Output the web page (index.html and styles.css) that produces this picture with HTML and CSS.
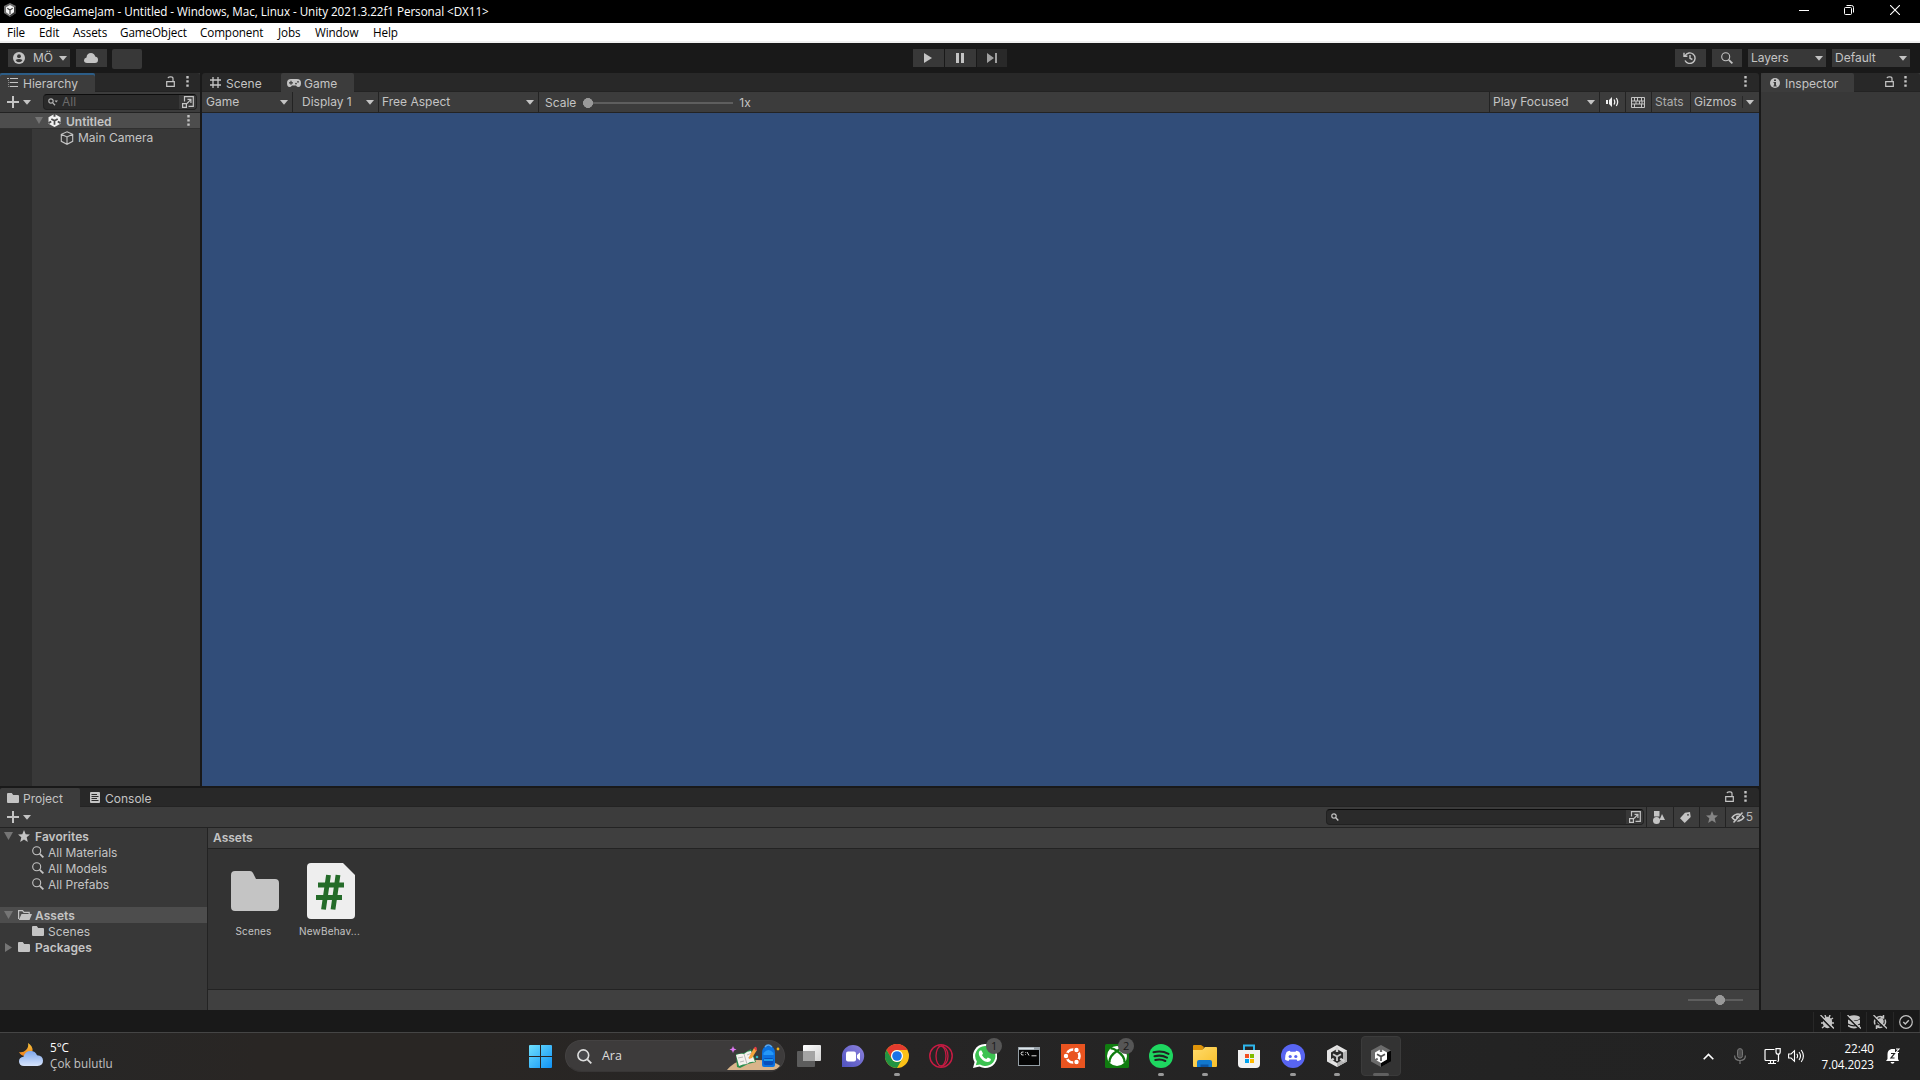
FILE: index.html
```html
<!DOCTYPE html>
<html lang="tr">
<head>
<meta charset="utf-8">
<title>GoogleGameJam - Unity</title>
<link rel="stylesheet" href="styles.css">
</head>
<body>
<svg class="defs" width="0" height="0">
  <defs>
    <symbol id="lock" viewBox="0 0 9 11"><path d="M.7 5.700h7.600v4.600H.7zM7 5.500V2.600Q7 .8 5 .8H4Q2.200.8 2 2.200" fill="none" stroke="#c4c4c4" stroke-width="1.200"/></symbol>
    <symbol id="dots" viewBox="0 0 3 11"><path d="M.3 0h2.400v2.400H.3zM.3 4.200h2.400v2.400H.3zM.3 8.400h2.400v2.400H.3z" fill="#c4c4c4"/></symbol>
    <symbol id="arrow" viewBox="0 0 8 5"><path d="M0 0h8L4 4.800z" fill="#c4c4c4"/></symbol>
    <symbol id="plus" viewBox="0 0 12 12"><path d="M5 0h2v5h5v2H7v5H5V7H0V5h5z" fill="#c4c4c4"/></symbol>
    <symbol id="find" viewBox="0 0 12 12"><circle cx="4.700" cy="4.700" r="4" fill="none" stroke="#c4c4c4" stroke-width="1.100"/><path d="M7.800 7.800l3.600 3.600" stroke="#c4c4c4" stroke-width="1.800"/></symbol>
    <symbol id="folder" viewBox="0 0 12 10"><path d="M0 1Q0 0 1 0h3.800L6.200 2H11q1 0 1 1v6q0 1-1 1H1Q0 10 0 9z" fill="#c4c4c4"/></symbol>
    <symbol id="star" viewBox="0 0 12 12"><path d="M6 0l1.700 4.200 4.300.3-3.300 2.800L9.800 12 6 9.500 2.200 12l1.100-4.700L0 4.500l4.300-.3z"/></symbol>
    <symbol id="expand" viewBox="0 0 12 12"><path d="M2.500 5.500V.7h8.800v9.600H6.500M.6 7.600h3.800v3.800H.6z" fill="none" stroke="#c4c4c4" stroke-width="1.200"/><path d="M5 7.500L8.500 3.800M5.500 3.400H8.900V7" fill="none" stroke="#c4c4c4" stroke-width="1.200"/></symbol>
  </defs>
</svg>

<header class="titlebar">
  <svg class="app-icon" width="14" height="14" viewBox="0 0 14 14"><path d="M7 0l6 3v7l-6 4-6-4V3z" fill="#6f6f6f"/><path d="M7 7l6-4v7l-6 4z" fill="#3a3a3a"/><path d="M7 2l4 2.300v5L7 12 3 9.300v-5z" fill="#f4f4f4"/><path d="M7 7v4M7 7L4.300 5.300M7 7l2.700-1.700" stroke="#444" stroke-width="1.200"/></svg>
  <span class="title-text">GoogleGameJam - Untitled - Windows, Mac, Linux - Unity 2021.3.22f1 Personal &lt;DX11&gt;</span>
  <svg class="win-min" width="10" height="10" viewBox="0 0 10 10"><path d="M0 5.500h10" stroke="#fff"/></svg>
  <svg class="win-max" width="10" height="10" viewBox="0 0 10 10"><path d="M.5 3.500q0-1 1-1h5q1 0 1 1v5q0 1-1 1h-5q-1 0-1-1zM2.500.5h5q2 0 2 2v5" fill="none" stroke="#fff"/></svg>
  <svg class="win-close" width="10" height="10" viewBox="0 0 10 10"><path d="M0 0l10 10M10 0L0 10" stroke="#fff" stroke-width="1.100"/></svg>
</header>
<nav class="menubar">
  <span class="m-file">File</span><span class="m-edit">Edit</span><span class="m-assets">Assets</span><span class="m-object">GameObject</span><span class="m-component">Component</span><span class="m-jobs">Jobs</span><span class="m-window">Window</span><span>Help</span>
</nav>

<div class="toolbar">
  <div class="btn account">
    <svg width="12" height="12" viewBox="0 0 12 12"><circle cx="6" cy="6" r="6" fill="#c4c4c4"/><circle cx="6" cy="4.200" r="1.900" fill="#383838"/><path d="M2.500 8q3.500-2.200 7 0Q8.500 10.300 6 10.300T2.500 8z" fill="#383838"/></svg>
    <span>MÖ</span><svg width="8" height="5"><use href="#arrow"/></svg>
  </div>
  <div class="btn cloud"><svg width="14" height="10" viewBox="0 0 14 10"><path d="M3 10Q0 10 0 7.300 0 5 2.500 4.500 2.800 0 7 0q3.300 0 4.200 3.500Q14 4 14 6.800 14 10 11 10z" fill="#c4c4c4"/></svg></div>
  <div class="btn blank"></div>
  <div class="btn play"><svg width="8" height="10"><path d="M0 0l8 5-8 5z" fill="#c4c4c4"/></svg></div>
  <div class="btn pause"><svg width="8" height="10"><path d="M0 0h3v10H0zM5 0h3v10H5z" fill="#c4c4c4"/></svg></div>
  <div class="btn step"><svg width="10" height="10"><path d="M0 0l7 5-7 5zM8 0h2v10H8z" fill="#a0a0a0"/></svg></div>
  <div class="btn history"><svg width="13" height="12" viewBox="0 0 13 12"><path d="M2.200 3.500A5.300 5.300 0 1 1 2 8.500M1 .8v3.400h3.400M7 3v3.300l2.400 1.200" fill="none" stroke="#c4c4c4" stroke-width="1.400"/></svg></div>
  <div class="btn search-btn"><svg width="12" height="12"><use href="#find"/></svg></div>
  <div class="btn select layers"><span>Layers</span><svg width="8" height="5"><use href="#arrow"/></svg></div>
  <div class="btn select"><span>Default</span><svg width="8" height="5"><use href="#arrow"/></svg></div>
</div>

<main class="workspace">
  <div class="left-area">
    <div class="upper">
      <section class="hierarchy">
        <div class="tabs">
          <div class="tab tab-hierarchy active focused"><svg width="11" height="9" viewBox="0 0 11 9"><path d="M0 .5h2M3 .5h8M3 4.500h8M3 8.500h8" stroke="#c4c4c4"/><path d="M1.500 2v7M1.500 4.500H3M1.500 8.500H3" fill="none" stroke="#8a8a8a" stroke-dasharray="1 1"/></svg><span>Hierarchy</span></div>
          <div class="tab-tools"><svg width="9" height="11"><use href="#lock"/></svg><svg width="3" height="11"><use href="#dots"/></svg></div>
        </div>
        <div class="strip h-strip">
          <svg width="12" height="12"><use href="#plus"/></svg><svg class="add-arrow" width="8" height="5"><use href="#arrow"/></svg>
          <div class="field h-field"><svg width="10" height="8" viewBox="0 0 10 8"><circle cx="3" cy="3" r="2.200" fill="none" stroke="#b4b4b4" stroke-width="1.200"/><path d="M4.600 4.600L7 7.300" stroke="#b4b4b4" stroke-width="1.300"/><path d="M6.500 2.500H10L8.200 4.500z" fill="#b4b4b4"/></svg><span>All</span><i class="field-end"><svg width="12" height="12"><use href="#expand"/></svg></i></div>
        </div>
        <div class="scene-row">
          <svg class="fold" width="8" height="7"><path d="M0 0h8L4 7z" fill="#757575"/></svg>
          <svg width="13" height="13" viewBox="0 0 13 13"><path d="M6.500 0L12.500 3.300v6.400L6.500 13 .5 9.700V3.300z" fill="#f2f2f2"/><path d="M6.500 6.800v4M6.500 6.800L3.300 4.900M6.500 6.800l3.200-1.900" stroke="#4d4d4d" stroke-width="1.700"/><path d="M5.500 0h2v2.700h-2zM0 8.200l2.700-1.500 1 1.600L1 9.900zM13 8.200l-2.700-1.500-1 1.600L12 9.900z" fill="#4d4d4d"/></svg>
          <span>Untitled</span><svg width="3" height="11"><use href="#dots"/></svg>
        </div>
        <div class="h-body">
          <div class="gutter"></div>
          <div class="object-row"><svg width="14" height="14" viewBox="0 0 14 14"><path d="M7 .8l5.700 2.500v7L7 13.300l-5.700-3v-7zM1.300 3.300L7 6l5.700-2.700M7 6v7.300" fill="none" stroke="#c4c4c4" stroke-width="1.100"/></svg><span>Main Camera</span></div>
        </div>
      </section>
      <section class="game">
        <div class="tabs">
          <div class="tab tab-scene"><svg width="11" height="11" viewBox="0 0 11 11"><path d="M3 0v11M8 0v11M0 3h11M0 8h11" stroke="#c4c4c4" stroke-width="1.300"/></svg><span>Scene</span></div>
          <div class="tab tab-game active"><svg width="14" height="8" viewBox="0 0 14 8"><path d="M4 0h6q4 0 4 4 0 4-2.500 4Q10 8 9 6.500H5Q4 8 2.500 8 0 8 0 4q0-4 4-4z" fill="#c4c4c4"/><path d="M4 1.800v4M2 3.800h4" stroke="#3c3c3c" stroke-width="1.200"/><circle cx="9" cy="4.600" r=".9" fill="#3c3c3c"/><circle cx="11" cy="2.800" r=".9" fill="#3c3c3c"/></svg><span>Game</span></div>
          <div class="tab-tools"><svg width="3" height="11"><use href="#dots"/></svg></div>
        </div>
        <div class="strip">
          <div class="cell c-game"><span>Game</span><svg width="8" height="5"><use href="#arrow"/></svg></div>
          <div class="cell c-display"><span>Display 1</span><svg width="8" height="5"><use href="#arrow"/></svg></div>
          <div class="cell c-aspect"><span>Free Aspect</span><svg width="8" height="5"><use href="#arrow"/></svg></div>
          <div class="c-scale"><span>Scale</span><i class="slider"></i><span>1x</span></div>
          <div class="cell c-focus"><span>Play Focused</span><svg width="8" height="5"><use href="#arrow"/></svg></div>
          <div class="cell c-sound"><svg width="13" height="10" viewBox="0 0 13 10"><path d="M0 3h2v4H0zM3 3l3-3v10L3 7z" fill="#eee"/><path d="M8 2.500q1.500 2.500 0 5M10.300 1q2.700 4 0 8" fill="none" stroke="#eee" stroke-width="1.300"/></svg></div>
          <div class="cell c-keys"><svg width="14" height="11" viewBox="0 0 14 11"><path d="M.5.5h13v10H.5zM.5 4h13M.5 7h13M3.500.5V4M6.500.5V4M10.500.5V4M5 4v3M8.500 4v3M11 4v3M3.500 7v3.500M10.500 7v3.500" fill="none" stroke="#c4c4c4"/></svg></div>
          <div class="cell c-stats"><span>Stats</span></div>
          <div class="cell c-gizmos"><span>Gizmos</span><i></i><svg width="8" height="5"><use href="#arrow"/></svg></div>
        </div>
        <div class="viewport"></div>
      </section>
    </div>
    <section class="project">
      <div class="tabs">
        <div class="tab tab-project active"><svg width="12" height="10"><use href="#folder"/></svg><span>Project</span></div>
        <div class="tab tab-console"><svg width="10" height="11" viewBox="0 0 10 11"><rect width="10" height="11" rx="1" fill="#c4c4c4"/><path d="M1.500 2.500H7M1.500 4.500h7M1.500 6.500H7M1.500 8.500h7" stroke="#282828"/></svg><span>Console</span></div>
        <div class="tab-tools"><svg width="9" height="11"><use href="#lock"/></svg><svg width="3" height="11"><use href="#dots"/></svg></div>
      </div>
      <div class="strip p-strip">
        <svg width="12" height="12"><use href="#plus"/></svg><svg class="add-arrow" width="8" height="5"><use href="#arrow"/></svg>
        <div class="field p-field"><svg width="8" height="8" viewBox="0 0 8 8"><circle cx="3" cy="3" r="2.200" fill="none" stroke="#c4c4c4" stroke-width="1.200"/><path d="M4.600 4.600L7.300 7.500" stroke="#c4c4c4" stroke-width="1.400"/></svg><i class="field-end"><svg width="12" height="12"><use href="#expand"/></svg></i></div>
        <div class="tool t-type"><svg width="12" height="13" viewBox="0 0 12 13"><path d="M1 0h5.500v5.500H1zM9 3l3 6H6.500z" fill="#c4c4c4"/><circle cx="3.500" cy="9.500" r="3.500" fill="#c4c4c4"/></svg></div>
        <div class="tool t-label"><svg width="11" height="11" viewBox="0 0 11 11"><path d="M5 .8L10 0l.7 5-6 6L0 6.300z" fill="#c4c4c4"/><circle cx="8" cy="2.800" r=".9" fill="#3c3c3c"/></svg></div>
        <div class="tool t-star"><svg width="12" height="12" fill="#858585"><use href="#star"/></svg></div>
        <div class="tool t-hidden"><svg width="14" height="11" viewBox="0 0 14 11"><path d="M1 5.500q6-7 12 0-6 7-12 0z" fill="none" stroke="#c4c4c4" stroke-width="1.300"/><circle cx="7" cy="5.500" r="1.900" fill="#c4c4c4"/><path d="M3.500 11.500l9-11" stroke="#3c3c3c" stroke-width="1.200"/><path d="M2.500 10.500l9-10" stroke="#c4c4c4" stroke-width="1.500"/></svg><span>5</span></div>
      </div>
      <div class="browser">
        <div class="tree">
          <div class="node root"><svg width="9" height="8"><path d="M0 0h9L4.500 8z" fill="#757575"/></svg><svg class="ic" width="12" height="12" fill="#c4c4c4"><use href="#star"/></svg><span>Favorites</span></div>
          <div class="node leaf"><svg width="12" height="12"><use href="#find"/></svg><span>All Materials</span></div>
          <div class="node leaf"><svg width="12" height="12"><use href="#find"/></svg><span>All Models</span></div>
          <div class="node leaf"><svg width="12" height="12"><use href="#find"/></svg><span>All Prefabs</span></div>
          <div class="node root selected"><svg width="9" height="8"><path d="M0 0h9L4.500 8z" fill="#757575"/></svg><svg class="ic open" width="14" height="10" viewBox="0 0 14 10"><path d="M.6 9V.6h3.900L6 2.400h5.200v1.800" fill="none" stroke="#c4c4c4" stroke-width="1.200"/><path d="M3.500 4H14l-2.500 6H.8z" fill="#c4c4c4"/></svg><span>Assets</span></div>
          <div class="node leaf"><svg width="12" height="10"><use href="#folder"/></svg><span>Scenes</span></div>
          <div class="node root"><svg width="9" height="9"><path d="M1 0v9l7-4.500z" fill="#757575"/></svg><svg class="ic" width="12" height="10"><use href="#folder"/></svg><span>Packages</span></div>
        </div>
        <div class="files">
          <div class="crumb">Assets</div>
          <div class="grid">
            <div class="item"><svg width="48" height="56" viewBox="0 0 48 56"><path d="M0 12q0-4 4-4h15q2 0 3 2l3 6h19q4 0 4 4v24q0 4-4 4H4q-4 0-4-4z" fill="#c4c4c4"/></svg><span>Scenes</span></div>
            <div class="item"><svg width="48" height="56" viewBox="0 0 48 56"><path d="M0 4q0-4 4-4h32l12 12v40q0 4-4 4H4q-4 0-4-4z" fill="#eee"/><path d="M21.500 12l-5 34.500M31 12l-5 34.500M11 22h26M9 34.500h26" stroke="#246b29" stroke-width="4.800"/></svg><span>NewBehav...</span></div>
          </div>
          <div class="files-foot"><i class="zoom-slider"></i></div>
        </div>
      </div>
    </section>
  </div>
  <section class="inspector">
    <div class="tabs">
      <div class="tab tab-inspector active"><svg width="10" height="10" viewBox="0 0 10 10"><circle cx="5" cy="5" r="5" fill="#c4c4c4"/><path d="M4 1.500h2v1.600H4zM3.500 4H6v3.500h.7v1H3.400v-1h.7V5h-.6z" fill="#3c3c3c"/></svg><span>Inspector</span></div>
      <div class="tab-tools"><svg width="9" height="11"><use href="#lock"/></svg><svg width="3" height="11"><use href="#dots"/></svg></div>
    </div>
  </section>
</main>

<div class="statusbar">
  <div><svg width="14" height="14" viewBox="0 0 14 14"><ellipse cx="7.500" cy="7.500" rx="4.700" ry="5.800" fill="#c4c4c4"/><path d="M2 3l3 2M1 8h4M2 13l4-3M13 3l-3 2M14 8h-4M13 13l-3-3M5 0l1 3M10 0L9 3" stroke="#c4c4c4" stroke-width="1.500"/><path d="M0 1.500L12.500 14" stroke="#191919" stroke-width="1.700"/><path d="M.5 0L14 13.500" stroke="#c4c4c4" stroke-width="1.300"/></svg></div>
  <div><svg width="14" height="14" viewBox="0 0 14 14"><ellipse cx="7" cy="2.800" rx="6" ry="2.600" fill="#c4c4c4"/><path d="M1 4.500q6 3.600 12 0v4q-6 3.600-12 0zM1 9.700q6 3.600 12 0v1.800q-6 3.800-12 0z" fill="#c4c4c4"/><path d="M0 1.500L12.500 14" stroke="#191919" stroke-width="1.600"/><path d="M.5 0L14 13.500" stroke="#c4c4c4" stroke-width="1.300"/></svg></div>
  <div><svg width="14" height="14" viewBox="0 0 14 14"><path d="M2 9.500A5.700 5.700 0 0 1 10 2.300M12 4.500A5.700 5.700 0 0 1 4 11.700M10.500 0v3H7.500M3.500 14v-3h3" fill="none" stroke="#c4c4c4" stroke-width="1.500"/><circle cx="7.500" cy="6.500" r="3.200" fill="#c4c4c4"/><path d="M0 1.500L12.500 14" stroke="#191919" stroke-width="1.600"/><path d="M.5 0L14 13.500" stroke="#c4c4c4" stroke-width="1.300"/></svg></div>
  <div><svg width="14" height="14" viewBox="0 0 14 14"><circle cx="7" cy="7" r="6.300" fill="none" stroke="#c4c4c4" stroke-width="1.200"/><path d="M4.300 7l2 2 3.500-3.800" fill="none" stroke="#c4c4c4" stroke-width="1.400"/></svg></div>
</div>

<footer class="taskbar">
  <div class="weather">
    <svg width="24" height="24" viewBox="0 0 24 24"><defs><linearGradient id="moon" x2="0" y2="1"><stop stop-color="#f8c63c"/><stop offset="1" stop-color="#ee7e1c"/></linearGradient><linearGradient id="cloudfill" x2="0" y2="1"><stop stop-color="#7fa8ee"/><stop offset="1" stop-color="#d7e4fb"/></linearGradient></defs><path d="M9 0q5 3 4.500 8T6 13Q2 13 0 9q4 1 7-2t2-7z" fill="url(#moon)"/><path d="M5 23q-5 0-5-4.700 0-4 4.500-4.600Q6 8 11.500 8q5 0 6.500 4.300 6 .4 6 5.400T18.500 23z" fill="url(#cloudfill)"/></svg>
    <div><b>5°C</b><span>Çok bulutlu</span></div>
  </div>
  <div class="start"><svg width="23" height="23" viewBox="0 0 23 23"><defs><linearGradient id="win" x2="1" y2="1"><stop stop-color="#6fe0fd"/><stop offset="1" stop-color="#1092f5"/></linearGradient></defs><path d="M1 0h10v11H0V1q0-1 1-1zM12 0h10q1 0 1 1v10H12zM0 12h11v11H1q-1 0-1-1zM12 12h11v10q0 1-1 1H12z" fill="url(#win)"/></svg></div>
  <div class="searchbox">
    <svg width="15" height="15" viewBox="0 0 15 15"><circle cx="6.300" cy="6.300" r="5.400" fill="#4a4a4d" stroke="#dedede" stroke-width="1.600"/><path d="M10.300 10.300L14.300 14.300" stroke="#dedede" stroke-width="1.800"/></svg>
    <span>Ara</span>
    <svg class="art" width="54" height="27" viewBox="0 0 54 27"><path d="M0 26q2-3 8-7 6-3 22-3 14 0 22 5l1 1q-2 4-8 4z" fill="#d9b48a"/><path d="M6 2l1 2.500L9.500 5.500 7 6.500 6 9 5 6.500 2.500 5.500 5 4.500z" fill="#e07af5"/><path d="M9 10l8-1 7-4 5 13-8 2-8 4-3-1z" fill="#2c8f4e"/><path d="M9 11q5-2 8-1 3-3 7-3l4 11q-5-1-8 2-4 0-8 2z" fill="#f5f3ee"/><path d="M17 10l3 10M11 14l5-1M13 18l4-1M20 11l5-2M21 14l5-2" stroke="#aaa" fill="none" stroke-width=".8"/><path d="M22 13l5-9 3 2-5 8-3 1z" fill="#f7a63b"/><path d="M27 4q2-3 3 1l-1 2z" fill="#e63d45"/><path d="M35 21V9q0-7 6.500-7T48 9v12q0 2-2 2H37q-2 0-2-2z" fill="#0b72e0"/><path d="M38 3q3-4 7 0" fill="none" stroke="#54a7f5" stroke-width="1.600"/><path d="M36.500 9q5-6 10 0v2h-10z" fill="#2598f8"/><rect x="36.500" y="14" width="10" height="7" rx="2" fill="#084ebb"/><path d="M37 16h9" stroke="#25b3f7" stroke-width="1.500"/><circle cx="51" cy="5" r="1.400" fill="#f5b417"/><circle cx="30" cy="13" r="1.300" fill="#30b7c6"/></svg>
  </div>
  <div class="task"><svg width="24" height="22" viewBox="0 0 24 22"><defs><linearGradient id="tv" x2="1" y2="1"><stop stop-color="#fff"/><stop offset="1" stop-color="#d2d2d2"/></linearGradient></defs><rect x="6" width="18" height="16" rx="1" fill="url(#tv)"/><rect y="6" width="18" height="16" rx="1" fill="#5c5c5c"/><path d="M6 6h12v10H6z" fill="#a4a4a4"/></svg></div>
  <div class="task"><svg width="24" height="24" viewBox="0 0 24 24"><defs><linearGradient id="chat" x1="1" x2="0" y2="1"><stop stop-color="#8d82dc"/><stop offset="1" stop-color="#4f52c0"/></linearGradient></defs><path d="M12 1a11.200 11 0 1 1 0 22H1V12A11.200 11 0 0 1 12 1z" fill="url(#chat)"/><rect x="5" y="7.500" width="10" height="10" rx="2" fill="#fff"/><path d="M16 11l3-2.500v8L16 14z" fill="#fff"/></svg></div>
  <div class="task running"><svg width="24" height="24" viewBox="0 0 24 24"><circle cx="12" cy="12" r="12" fill="#fbc117"/><path d="M1.600 6A12 12 0 0 1 22.400 6H12a6 6 0 0 0-5.200 9z" fill="#e33b2e"/><path d="M1.600 6A12 12 0 0 0 12 24l5.200-9A6 6 0 0 1 6.800 15z" fill="#229342"/><circle cx="12" cy="12" r="6" fill="#fff"/><circle cx="12" cy="12" r="4.800" fill="#1a73e8"/></svg></div>
  <div class="task"><svg width="24" height="24" viewBox="0 0 24 24"><circle cx="12" cy="12" r="11.200" fill="none" stroke="#c61b43" stroke-width="1.500"/><ellipse cx="12" cy="12" rx="5" ry="10" fill="none" stroke="#c61b43" stroke-width="1.300"/><path d="M12 1.500q7 2 7 10.500t-7 10.500" fill="none" stroke="#c61b43" stroke-width="1.300"/></svg></div>
  <div class="task"><svg width="24" height="24" viewBox="0 0 24 24"><path d="M12 0a12 12 0 1 1-5.500 22.500L0 24l1.600-6A12 12 0 0 1 12 0z" fill="#fff"/><path d="M12 2a10 10 0 1 1-5 18.400L2.800 21.300 3.900 17.500A10 10 0 0 1 12 2z" fill="#3cc251"/><path d="M8.500 6.500l1.500 3-1 1.700q1.700 3 4.300 3.800l1.600-1.500 3 1.500q0 3-3.500 3-5-.5-8-6-1.500-4 .600-5.500z" fill="#fff"/></svg><em>1</em></div>
  <div class="task"><svg width="22" height="19" viewBox="0 0 22 19"><rect width="22" height="19" fill="#949ea5"/><path d="M1 3h20v15H1z" fill="#050505"/><path d="M1 .7h15v1.600H1z" fill="#dce5ea"/><path d="M5.500 5Q3 4.500 3 6.500t2.500 1.500M7.500 5.300v.6M7.500 7.200v.6M9 5l2 3.500M13.500 8.800h5" stroke="#ddd" fill="none"/></svg></div>
  <div class="task"><svg width="24" height="24" viewBox="0 0 24 24"><path d="M0 0h24v24H0z" fill="#e95420"/><circle cx="12" cy="12" r="6.500" fill="none" stroke="#fff" stroke-width="2.600"/><g fill="#fff" stroke="#e95420" stroke-width="1.200"><circle cx="5" cy="12" r="2.800"/><circle cx="15.500" cy="6" r="2.800"/><circle cx="15.500" cy="18" r="2.800"/></g></svg></div>
  <div class="task"><svg width="24" height="24" viewBox="0 0 24 24"><rect width="24" height="24" rx="1.500" fill="#107c10"/><circle cx="12" cy="12" r="10" fill="#fff"/><path d="M5.500 4.500Q8 4 12 7q4-3 6.500-2.500M12 7Q4 12 4.500 18.700M12 7q8 5 7.500 11.700" fill="none" stroke="#107c10" stroke-width="2.300"/></svg><em>2</em></div>
  <div class="task running"><svg width="24" height="24" viewBox="0 0 24 24"><circle cx="12" cy="12" r="12" fill="#1ed760"/><path d="M4.500 8.300q8-2.300 15 1.500M5.500 12.300q6.500-1.900 12.500 1.300M6.300 16q5.500-1.500 10 1" fill="none" stroke="#222" stroke-width="2.100" stroke-linecap="round"/></svg></div>
  <div class="task running"><svg width="24" height="22" viewBox="0 0 24 22"><defs><linearGradient id="fold" x2="1" y2="1"><stop stop-color="#ffdb6c"/><stop offset="1" stop-color="#f9bf29"/></linearGradient></defs><path d="M0 1q0-1 1-1h7l3 2-2 4H0z" fill="#df9409"/><path d="M0 5h9l3-3h11q1 0 1 1v18q0 1-1 1H1q-1 0-1-1z" fill="url(#fold)"/><path d="M4 22v-5q0-2 2-2h11q2 0 2 2v5z" fill="#1178cd"/><path d="M7.500 22v-2.500h8V22z" fill="#0c539f"/></svg></div>
  <div class="task"><svg width="24" height="24" viewBox="0 0 24 24"><path d="M7 7V1.500h10V7" fill="none" stroke="#2eb5ea" stroke-width="2"/><path d="M1 6h22v14q0 4-4 4H5q-4 0-4-4z" fill="#f2f2f2"/><path d="M8 10h4v4H8z" fill="#f25022"/><path d="M13 10h4v4h-4z" fill="#7fba00"/><path d="M8 15h4v4H8z" fill="#00a4ef"/><path d="M13 15h4v4h-4z" fill="#ffb900"/></svg></div>
  <div class="task running"><svg width="24" height="24" viewBox="0 0 24 24"><circle cx="12" cy="12" r="12" fill="#5865f2"/><path d="M8.800 6.800l.7.900h5l.7-.9q2 .3 3.200 1.200 1.800 3.200 1.600 7.400-1.500 1.300-3.500 1.700l-.9-1.500H8.400l-.9 1.500q-2-.4-3.500-1.700Q3.800 11.200 5.600 8q1.200-.9 3.200-1.200z" fill="#fff"/><circle cx="9.200" cy="12.500" r="1.600" fill="#5865f2"/><circle cx="14.800" cy="12.500" r="1.600" fill="#5865f2"/></svg></div>
  <div class="task running"><svg width="22" height="24" viewBox="0 0 22 24"><path d="M11 1l10 5.500v11L11 23 1 17.500v-11z" fill="#e4e4e4"/><path d="M11 12l10-5.500v11L11 23z" fill="#b4b4b4"/><path d="M11 5l6 3.400v7.200L11 19l-6-3.400V8.400z" fill="#2b2b2b"/><path d="M11 12.500v4.500M11 12.500L7 10.200M11 12.500l4-2.300" stroke="#ccc" stroke-width="1.800"/><path d="M9.800 3h2.400v5H9.800zM3 16.200l4.200-2.500 1.200 2L4.200 18.200zM19 16.200l-4.200-2.500-1.200 2 4.200 2.500z" fill="#d4d4d4"/></svg></div>
  <div class="task running current"><svg width="22" height="24" viewBox="0 0 22 24"><path d="M11 1l10 5.500v11L11 23 1 17.500v-11z" fill="#6c6c6c"/><path d="M21 6.500v11L11 23v-4l6-4V8.500z" fill="#050505"/><path d="M11 5l6 3.400v7.200L11 19l-6-3.400V8.400z" fill="#fff"/><path d="M11 12.500v4.500M11 12.500L7 10.200M11 12.500l4-2.300" stroke="#555" stroke-width="1.700"/><path d="M9.800 4h2.400v4H9.800zM3.500 16l3.700-2.200 1 1.700-3.700 2.200z" fill="#6c6c6c"/></svg></div>
  <div class="tray">
    <svg class="chev" width="11" height="7" viewBox="0 0 11 7"><path d="M.7 6.200l4.800-4.800 4.800 4.800" fill="none" stroke="#fff" stroke-width="1.600"/></svg>
    <svg class="mic" width="12" height="16" viewBox="0 0 12 16"><rect x="3.500" y=".6" width="5" height="9.500" rx="2.500" fill="#4c4c4c" stroke="#777"/><path d="M.6 7.500q0 5 5.400 5t5.400-5M6 12.500V16" fill="none" stroke="#777" stroke-width="1.200"/></svg>
    <svg class="net" width="17" height="17" viewBox="0 0 17 17"><path d="M10.500 1.500H2q-1 0-1 1v9q0 1 1 1h10.500M14.500 6.500v6q0 1-1.200 1M4 15.500h8M6.500 12.500v3M9.500 12.500v3M12 .7h4.200v3q0 2.500-2.100 2.500T12 3.700z" fill="none" stroke="#fff" stroke-width="1.200"/></svg>
    <svg class="vol" width="17" height="14" viewBox="0 0 17 14"><path d="M.6 5h2.500l3.400-3.300v10.600L3.100 9H.6z" fill="none" stroke="#fff" stroke-width="1.100"/><path d="M8.800 4.800q1.600 2.200 0 4.400M11 3q3 4 0 8M13.200 1q4.400 6 0 12" fill="none" stroke="#fff" stroke-width="1.100"/></svg>
    <div class="clock"><span>22:40</span><span>7.04.2023</span></div>
    <svg class="bell" width="14" height="16" viewBox="0 0 14 16"><path d="M1.500 11V6q0-4 4-5H9v3h3v7l1 2H0zM4.500 14h4q-.4 1.800-2 1.800t-2-1.800z" fill="#fff"/><path d="M5 5.500h3.500L5 10h3.500" fill="none" stroke="#222" stroke-width="1.200"/><path d="M10 1h3l-3 3.500h3" fill="none" stroke="#fff" stroke-width="1.100"/></svg>
  </div>
</footer>
</body>
</html>
```
FILE: styles.css
```css
* { box-sizing: border-box; }
body {
  margin: 0; width: 1920px; height: 1080px; overflow: hidden;
  display: flex; flex-direction: column;
  background: #191919; color: #c4c4c4;
  font: 12px/16px Inter, "Liberation Sans", sans-serif;
  white-space: nowrap;
}
.defs { position: absolute; }
svg { display: block; flex: none; }
i, em, b { font-style: normal; font-weight: normal; }

.titlebar {
  height: 23px; flex: none; background: #000; color: #fff;
  display: flex; align-items: center; padding: 0 20px 3px 3px;
  font-family: "Open Sans", "Noto Sans", sans-serif; font-size: 11.7px;
}
.title-text { margin: 2px auto 0 7px; letter-spacing: -0.055px; }
.win-min { margin-right: 35px; }
.win-max { margin-right: 36px; }

.menubar {
  height: 20px; flex: none; background: #fff; color: #000;
  border-bottom: 2px solid #f0f0f0;
  display: flex; align-items: center; padding: 0 0 0 7px;
  font-family: "Open Sans", "Noto Sans", sans-serif; font-size: 11.7px; letter-spacing: -0.12px;
}
.m-file { width: 32px; }
.m-edit { width: 34px; }
.m-assets { width: 47px; }
.m-object { width: 80px; }
.m-component { width: 78px; }
.m-jobs { width: 37px; }
.m-window { width: 58px; }

.toolbar { height: 30px; flex: none; display: flex; align-items: flex-start; padding: 6px 10px 0 8px; }
.btn { height: 18px; background: #383838; display: flex; align-items: center; justify-content: center; }
.account { width: 62px; margin-right: 6px; justify-content: flex-start; padding-left: 5px; }
.account span { width: 26px; margin-left: 8px; }
.cloud { width: 31px; margin-right: 5px; padding-right: 1px; }
.blank { width: 30px; height: 20px; border-radius: 2px; margin-right: 771px; }
.play { width: 31px; margin-right: 1px; padding-right: 1px; }
.pause { width: 31px; margin-right: 1px; padding-right: 1px; }
.step { width: 30px; background: #292929; margin-right: auto; }
.history { width: 31px; margin-right: 6px; padding-right: 2px; }
.search-btn { width: 30px; margin-right: 6px; padding-right: 1px; }
.select { width: 78px; justify-content: space-between; padding: 0 3px; }
.layers { margin-right: 6px; }

.workspace { height: 937px; flex: none; display: flex; gap: 2px; }
.left-area { width: 1759px; display: flex; flex-direction: column; gap: 2px; }
.upper { height: 713px; display: flex; gap: 2px; }
.hierarchy { width: 200px; background: #383838; display: flex; flex-direction: column; }
.game { width: 1557px; display: flex; flex-direction: column; }
.inspector { width: 159px; background: #383838; }

.tabs { height: 19px; flex: none; background: #282828; border-bottom: 1px solid #232323; display: flex; border-radius: 3px 3px 0 0; }
.tab { height: 19px; display: flex; align-items: center; }
.tab span { padding-top: 2px; }
.tab.active { background: #3c3c3c; border-radius: 2px 2px 0 0; }
.tab.focused { box-shadow: inset 0 2px #2c5d87; }
.tab-hierarchy { width: 95px; padding-left: 7px; gap: 5px; }
.tab-scene { width: 79px; padding-left: 8px; gap: 5px; }
.tab-game { width: 73px; padding-left: 6px; gap: 3px; }
.tab-project { width: 80px; padding-left: 7px; gap: 4px; }
.tab-console { padding-left: 10px; gap: 5px; }
.tab-inspector { width: 93px; padding-left: 9px; gap: 5px; }
.tab-tools { margin-left: auto; padding: 0 12px 1px 0; display: flex; align-items: center; gap: 11px; }
.hierarchy .tab-tools { padding-right: 11px; }
.project .tab-tools, .inspector .tab-tools { gap: 10px; }
.inspector .tab-tools { padding-right: 13px; }

.strip { height: 21px; flex: none; background: #3c3c3c; border-bottom: 1px solid #232323; display: flex; align-items: center; }
.h-strip, .p-strip { padding-left: 7px; }
.add-arrow { margin-left: 4px; }
.field { height: 16px; background: #2a2a2a; border: 1px solid #212121; border-top-color: #0d0d0d; border-radius: 4px; display: flex; align-items: center; overflow: hidden; }
.field-end { width: 17px; height: 16px; margin-left: auto; background: #383838; display: flex; align-items: center; justify-content: center; }
.h-field { width: 154px; margin-left: 12px; padding-left: 4px; color: #6b6b6b; }
.h-field span { margin-left: 4px; }
.scene-row { height: 16px; background: #4d4d4d; border-bottom: 1px solid #303030; display: flex; align-items: center; padding: 0 10px 0 35px; font-weight: 600; }
.scene-row .fold { margin-right: 5px; }
.scene-row span { margin: 2px auto 0 5px; }
.h-body { flex: 1; display: flex; }
.gutter { width: 32px; background: #2d2d2d; }
.object-row { height: 18px; display: flex; align-items: center; padding-left: 28px; gap: 4px; }
.object-row svg { margin-bottom: 1px; }

.cell { height: 20px; border-right: 1px solid #232323; display: flex; align-items: center; justify-content: space-between; }
.c-game { width: 91px; padding: 0 4px; }
.c-display { width: 86px; padding: 0 4px 0 9px; }
.c-aspect { width: 160px; padding: 0 4px 0 3px; }
.c-scale { margin-right: auto; display: flex; align-items: center; padding: 2px 0 0 6px; }
.slider { width: 150px; height: 10px; margin: 0 6px; background: radial-gradient(circle at 5px 5px, #999 4.700px, transparent 5.200px), linear-gradient(#5e5e5e, #5e5e5e) 5px 4px / 145px 2px no-repeat; }
.c-scale .slider { margin-left: 7px; }
.c-focus { width: 111px; border-left: 1px solid #232323; padding: 0 4px 0 3px; }
.c-sound { width: 26px; justify-content: center; }
.c-keys { width: 26px; justify-content: center; padding-right: 1px; }
.c-stats { width: 39px; padding-left: 3px; color: #adadad; }
.c-gizmos { width: 68px; padding: 0 5px 0 3px; border-right: 0; }
.c-gizmos i { width: 1px; height: 12px; margin-left: 2px; background: #282828; }
.viewport { flex: 1; background: #314d79; }

.project { height: 222px; display: flex; flex-direction: column; }
.p-field { width: 318px; margin-left: auto; padding-left: 4px; }
.tool { height: 20px; border-left: 1px solid #232323; display: flex; align-items: center; justify-content: center; }
.t-type { width: 27px; margin-left: 2px; padding-right: 2px; }
.t-label { width: 26px; padding-right: 2px; }
.t-star { width: 26px; padding-right: 2px; }
.t-hidden { width: 34px; padding-right: 1px; }
.t-hidden span { margin-left: 1px; color: #b4b4b4; }
.browser { flex: 1; display: flex; }
.tree { width: 208px; background: #383838; border-right: 1px solid #232323; }
.node { height: 16px; display: flex; align-items: center; }
.node span { padding-top: 2px; }
.root { padding-left: 4px; font-weight: 600; letter-spacing: 0.05px; }
.root .ic { margin: 0 5px; }
.root .open { margin-right: 3px; }
.leaf { padding-left: 32px; gap: 4px; }
.leaf svg { margin-bottom: 1px; }
.selected { margin-top: 15px; background: #4d4d4d; }
.files { flex: 1; display: flex; flex-direction: column; background: #333; }
.crumb { height: 21px; background: #3f3f3f; border-bottom: 1px solid #232323; padding: 2px 0 0 5px; font-weight: 600; }
.grid { flex: 1; display: flex; padding: 14px 0 0 8px; }
.item { width: 76px; display: flex; flex-direction: column; align-items: center; font-size: 10px; letter-spacing: 0.18px; line-height: 14px; gap: 5px; }
.item svg { margin-left: 1px; }
.item span { margin-right: 1px; }
.files-foot { height: 21px; background: #404040; border-top: 1px solid #232323; display: flex; align-items: center; justify-content: flex-end; padding-right: 16px; }
.zoom-slider { width: 55px; height: 10px; background: radial-gradient(circle at 32px 5px, #999 4.700px, transparent 5.200px), linear-gradient(#5e5e5e, #5e5e5e) 0 4px / 55px 2px no-repeat; }

.statusbar { height: 22px; flex: none; display: flex; justify-content: flex-end; padding: 2px 0 0; border-right: 1px solid #272727; }
.statusbar div { width: 26.400px; height: 20px; border-left: 1px solid #272727; display: flex; align-items: center; justify-content: center; }

.taskbar {
  height: 48px; flex: none; border-top: 1px solid #454545; display: flex; align-items: center; color: #fff;
  padding-bottom: 1px;
  background: linear-gradient(90deg, #272727 0, #292624 260px, #292624 480px, #262525 900px, #232323 1500px, #222 100%);
  font-family: "Open Sans", "Noto Sans", sans-serif; font-size: 11.700px; letter-spacing: -0.05px;
}
.weather { width: 519px; padding-left: 19px; display: flex; align-items: center; gap: 7px; }
.weather div { display: flex; flex-direction: column; margin-bottom: 2px; }
.weather span { color: #c2c2c2; letter-spacing: 0.05px; }
.weather svg { margin-bottom: 3px; }
.start { width: 46px; padding-left: 10px; }
.searchbox { width: 220px; height: 32px; border-radius: 16px; background: #3d3b3b; border: 1px solid #444242; border-bottom-color: #383636; display: flex; align-items: center; padding-left: 11px; margin-right: 2px; overflow: hidden; color: #ddd; }
.searchbox span { margin: 0 auto 0 10px; font-size: 12.500px; }
.art { margin-right: 3px; margin-top: 2px; }
.task { position: relative; width: 44px; height: 40px; display: flex; align-items: center; justify-content: center; }
.task.running::after { content: ""; position: absolute; left: 19px; bottom: 0; width: 6px; height: 3px; border-radius: 2px; background: #999; }
.task.current { width: 40px; margin-left: 2px; background: #333; border: 1px solid #3b3b3b; border-radius: 4px; }
.task.current::after { left: 11px; width: 16px; background: #606060; bottom: -1px; }
.task em { position: absolute; left: 23px; top: 2px; width: 16px; height: 16px; border-radius: 8px; background: #565656; color: #1a1a1a; text-align: center; font-size: 11px; line-height: 16px; }
.tray { margin-left: auto; display: flex; align-items: center; padding-right: 20px; }
.chev { margin-right: 20px; }
.mic { margin-right: 18px; }
.net { margin-right: 7px; }
.clock { width: 69px; display: flex; flex-direction: column; text-align: right; margin-bottom: 1px; }
.bell { margin-left: 12px; }
```
